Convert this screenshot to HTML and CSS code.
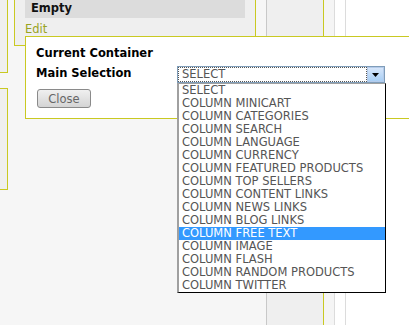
FILE: index.html
```html
<!DOCTYPE html>
<html>
<head>
    <meta charset="UTF-8">
    <title>Container Settings</title>
    <link rel="stylesheet" href="styles.css">
</head>
<body>
    <div class="page">
        <div class="side">
            <div class="side-box first"></div>
            <div class="side-box second"></div>
        </div>
        <div class="panel-col">
            <div class="panel">
                <div class="panel-title">Empty</div>
                <a class="edit-link" href="#">Edit</a>
            </div>
        </div>
        <div class="col col-c"></div>
        <div class="col col-d"></div>
        <div class="col col-e"></div>
        <div class="col col-f"></div>
        <div class="col col-rest"></div>
    </div>

    <div class="dialog">
        <div class="row">
            <span class="label">Current Container</span>
        </div>
        <div class="row select-row">
            <span class="label">Main Selection</span>
            <div class="select-wrap">
                <div class="select">
                    <span class="select-value">SELECT</span>
                    <span class="select-btn">
                        <svg width="7" height="4" viewBox="0 0 7 4"><path d="M0 0h7L3.5 4z" fill="#000"/></svg>
                    </span>
                </div>
                <ul class="options">
                    <li>SELECT</li>
                    <li>COLUMN MINICART</li>
                    <li>COLUMN CATEGORIES</li>
                    <li>COLUMN SEARCH</li>
                    <li>COLUMN LANGUAGE</li>
                    <li>COLUMN CURRENCY</li>
                    <li>COLUMN FEATURED PRODUCTS</li>
                    <li>COLUMN TOP SELLERS</li>
                    <li>COLUMN CONTENT LINKS</li>
                    <li>COLUMN NEWS LINKS</li>
                    <li>COLUMN BLOG LINKS</li>
                    <li class="active">COLUMN FREE TEXT</li>
                    <li>COLUMN IMAGE</li>
                    <li>COLUMN FLASH</li>
                    <li>COLUMN RANDOM PRODUCTS</li>
                    <li>COLUMN TWITTER</li>
                </ul>
            </div>
        </div>
        <button class="close-btn">Close</button>
    </div>
</body>
</html>
```

FILE: styles.css
```css
body {
    font-family: "DejaVu Sans", Verdana, sans-serif;
    font-size: 11px;
    margin: 0;
    background-color: #f6f6f6;
    overflow: hidden;
    position: relative;
    height: 325px;
}
.page {
    display: flex;
    height: 325px;
}
.side {
    width: 14px;
    flex: none;
}
.side-box {
    width: 7px;
    background-color: #efefef;
    border: 1px solid #c9c922;
    border-left: none;
}
.side-box.first {
    height: 72px;
    border-top: none;
}
.side-box.second {
    height: 100px;
    margin-top: 15px;
}
.panel-col {
    width: 242px;
    flex: none;
}
.panel {
    background-color: #efefef;
    border: 1px solid #c9c922;
    border-top: none;
    padding: 0 10px 8px 10px;
    height: 37px;
}
.panel-title {
    background-color: #dcdcdc;
    font-weight: bold;
    font-size: 11.5px;
    color: #111;
    line-height: 14px;
    padding: 1px 6px 3px 6px;
}
.edit-link {
    display: block;
    margin-top: 3px;
    line-height: 16px;
    font-size: 11.5px;
    color: #99a31f;
    text-decoration: none;
}
.col {
    flex: none;
}
.col-c {
    width: 10px;
}
.col-d {
    width: 56px;
    background-color: #efefef;
    border-left: 1px solid #c8c8c8;
    border-right: 1px solid #c9c922;
}
.col-e {
    width: 10px;
    background-color: #f5f5f5;
    border-right: 1px solid #dcdcdc;
}
.col-f {
    width: 10px;
    background-color: #fff;
    border-right: 1px solid #dcdcdc;
}
.col-rest {
    flex: 1;
    background-color: #fff;
}
.dialog {
    position: absolute;
    left: 25px;
    right: 0;
    top: 36px;
    height: 73px;
    background-color: #fff;
    border: 1px solid #c9c922;
    border-right: none;
    padding: 8px 0 0 10px;
}
.row {
    line-height: 16px;
}
.label {
    font-weight: bold;
    font-size: 11.5px;
    color: #000;
}
.select-row {
    display: grid;
    grid-template-columns: 141px 208px;
    align-items: start;
    margin-top: 4px;
}
.select-row .label {
    line-height: 14px;
}
.select-wrap {
    position: relative;
}
.select {
    display: flex;
    height: 15px;
    border: 1px solid #7f9db9;
}
.select-value {
    flex: 1;
    border: 1px dotted #555;
    line-height: 13px;
    padding-left: 3px;
    font-size: 11.5px;
    color: #555;
}
.select-btn {
    width: 17px;
    display: flex;
    align-items: center;
    justify-content: center;
    background: linear-gradient(#d6e6fa, #a9cff5);
    border: 1px solid #b5cbea;
    box-sizing: border-box;
}
.options {
    position: absolute;
    top: 17px;
    left: 0;
    width: 206px;
    margin: 0;
    padding: 0;
    list-style: none;
    background-color: #fff;
    border-top: 1px solid #a0a0a0;
    border-left: 2px solid #a0a0a0;
    border-right: 1px solid #000;
    border-bottom: 1px solid #000;
}
.options li {
    line-height: 13px;
    padding-left: 3px;
    font-size: 11.5px;
    color: #555;
    white-space: nowrap;
}
.options li.active {
    background-color: #3399ff;
    color: #fff;
}
.close-btn {
    display: block;
    margin: 6px 0 0 1px;
    width: 54px;
    height: 19px;
    padding: 0;
    font-family: "DejaVu Sans", Verdana, sans-serif;
    font-size: 11.5px;
    color: #666;
    background: linear-gradient(#f0f0f0, #d4d4d4);
    border: 1px solid #8a8a8a;
    border-radius: 3px;
}
```
